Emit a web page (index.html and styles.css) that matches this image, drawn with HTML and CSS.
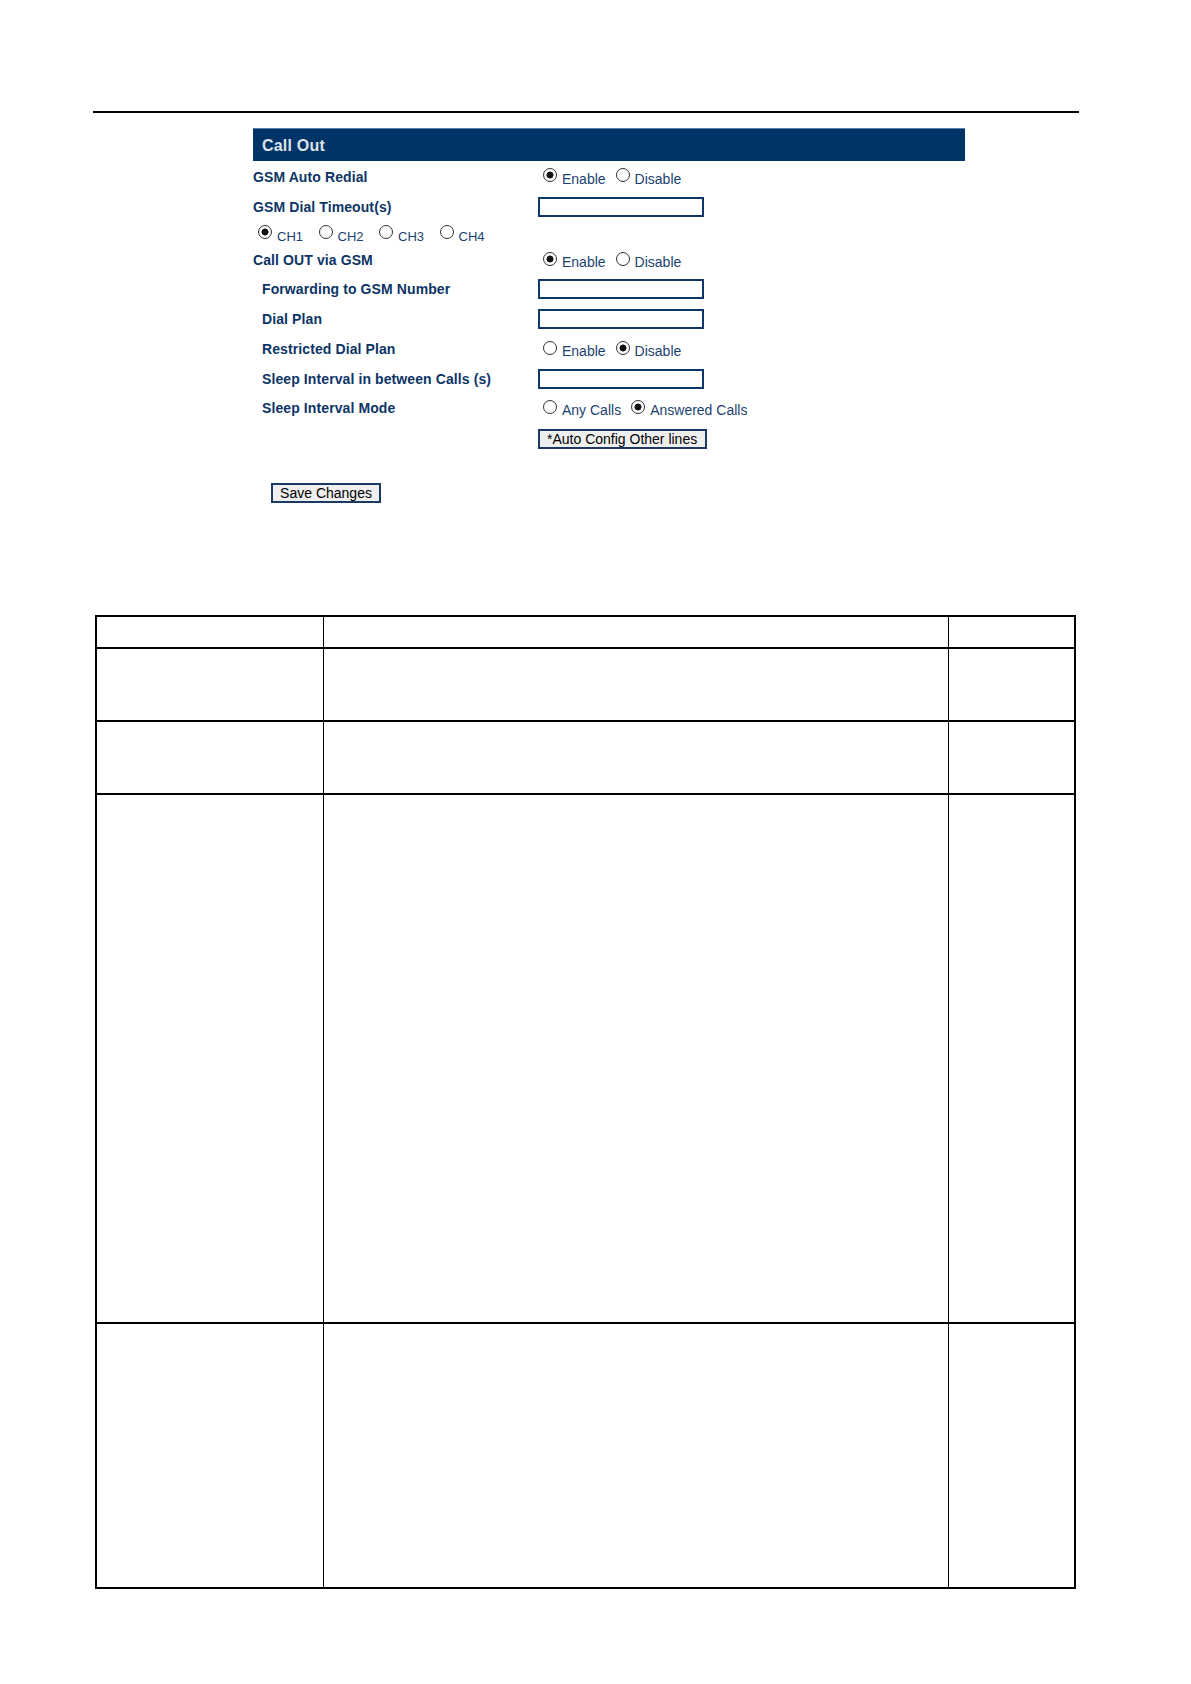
FILE: index.html
```html
<!DOCTYPE html>
<html lang="en">
<head>
<meta charset="utf-8">
<title>Call Out</title>
<link rel="stylesheet" href="styles.css">
</head>
<body>
<div class="page">
  <div class="rule"></div>

  <section class="panel">
    <div class="panel-head">Call Out</div>

    <div class="form">
      <div class="row h31">
        <label class="lbl">GSM Auto Redial</label>
        <div class="ctl">
          <label class="opt"><input type="radio" name="redial" checked><span>Enable</span></label>
          <label class="opt"><input type="radio" name="redial"><span>Disable</span></label>
        </div>
      </div>

      <div class="row h29">
        <label class="lbl">GSM Dial Timeout(s)</label>
        <div class="ctl"><input class="txt" type="text"></div>
      </div>

      <div class="chrow h25">
        <label class="ch"><input type="radio" name="ch" checked><span>CH1</span></label>
        <label class="ch"><input type="radio" name="ch"><span>CH2</span></label>
        <label class="ch"><input type="radio" name="ch"><span>CH3</span></label>
        <label class="ch"><input type="radio" name="ch"><span>CH4</span></label>
      </div>

      <div class="row h28">
        <label class="lbl">Call OUT via GSM</label>
        <div class="ctl">
          <label class="opt"><input type="radio" name="via" checked><span>Enable</span></label>
          <label class="opt"><input type="radio" name="via"><span>Disable</span></label>
        </div>
      </div>

      <div class="row h30">
        <label class="lbl sub">Forwarding to GSM Number</label>
        <div class="ctl"><input class="txt" type="text"></div>
      </div>

      <div class="row h29">
        <label class="lbl sub">Dial Plan</label>
        <div class="ctl"><input class="txt" type="text"></div>
      </div>

      <div class="row h32">
        <label class="lbl sub">Restricted Dial Plan</label>
        <div class="ctl">
          <label class="opt"><input type="radio" name="rdp"><span>Enable</span></label>
          <label class="opt"><input type="radio" name="rdp" checked><span>Disable</span></label>
        </div>
      </div>

      <div class="row h27">
        <label class="lbl sub">Sleep Interval in between Calls (s)</label>
        <div class="ctl"><input class="txt" type="text"></div>
      </div>

      <div class="row h32">
        <label class="lbl sub">Sleep Interval Mode</label>
        <div class="ctl">
          <label class="opt"><input type="radio" name="mode"><span>Any Calls</span></label>
          <label class="opt"><input type="radio" name="mode" checked><span>Answered Calls</span></label>
        </div>
      </div>

      <div class="row h29">
        <span></span>
        <div class="ctl"><button class="btn btn-auto" type="button">*Auto Config Other lines</button></div>
      </div>
    </div>

    <div class="save-row">
      <button class="btn btn-save" type="button">Save Changes</button>
    </div>
  </section>

  <table class="spec">
    <colgroup>
      <col class="c1">
      <col class="c2">
      <col class="c3">
    </colgroup>
    <tr class="t-head"><td></td><td></td><td></td></tr>
    <tr class="t-short"><td></td><td></td><td></td></tr>
    <tr class="t-short"><td></td><td></td><td></td></tr>
    <tr class="t-long"><td></td><td></td><td></td></tr>
    <tr class="t-mid"><td></td><td></td><td></td></tr>
  </table>
</div>
</body>
</html>
```

FILE: styles.css
```css
* { box-sizing: border-box; }

html, body {
  margin: 0;
  padding: 0;
  background: #ffffff;
}

body {
  font-family: "Liberation Sans", Arial, sans-serif;
  font-size: 14px;
  color: #000;
}

.page {
  width: 1191px;
  min-height: 1684px;
  overflow: hidden;
}

.rule {
  margin: 111px 0 0 93px;
  width: 986px;
  height: 2px;
  background: #000;
}

.panel {
  margin: 15px 0 0 253px;
  width: 712px;
}

.panel-head {
  height: 33px;
  background: #003366;
  border-top: 1px solid #5b7ea6;
  color: #dde2ea;
  font-weight: bold;
  font-size: 16px;
  line-height: 33px;
  padding-left: 9px;
  letter-spacing: 0.2px;
}

.form {
  display: flex;
  flex-direction: column;
}

.row {
  display: grid;
  grid-template-columns: 285px 1fr;
  align-items: center;
}

.h25 { height: 25px; }
.h27 { height: 27px; }
.h28 { height: 28px; }
.h29 { height: 29px; }
.h30 { height: 30px; }
.h31 { height: 31px; }
.h32 { height: 32px; }

.lbl {
  font-weight: bold;
  font-size: 14px;
  color: #0d3466;
  letter-spacing: 0.1px;
}

.lbl.sub { padding-left: 9px; }

.ctl {
  display: flex;
  align-items: center;
}

.opt {
  display: flex;
  align-items: center;
  margin-right: 10px;
  color: #1b3f70;
  font-size: 14px;
}

.opt input,
.ch input {
  -webkit-appearance: none;
  appearance: none;
  width: 14px;
  height: 14px;
  margin: 0 5px 3px 5px;
  border: 1px solid #333;
  border-radius: 50%;
  background: radial-gradient(circle at 50% 50%, #ffffff 0, #ffffff 60%, #e6e6e6 100%);
  flex: none;
}

.opt input:checked,
.ch input:checked {
  background: radial-gradient(circle at 50% 50%, #111 0, #111 3.2px, #fff 3.8px, #fff 60%, #e6e6e6 100%);
}

.opt span { padding-top: 4px; }

.opt + .opt input { margin-left: 0; }

.chrow {
  display: flex;
  align-items: center;
}

.ch {
  display: flex;
  align-items: center;
  color: #1b3f70;
  font-size: 13px;
  margin-right: 10.5px;
}

.ch span { padding-top: 5px; }

.txt {
  width: 166px;
  height: 20px;
  margin: 0;
  border: 2px solid #0d3766;
  background: #fff;
  padding: 0 3px;
  font: 13px "Liberation Sans", Arial, sans-serif;
}

.btn {
  font-family: "Liberation Sans", Arial, sans-serif;
  font-size: 14px;
  color: #000;
  background: #efefef;
  border: 2px solid #1a3a63;
  height: 20px;
  line-height: 16px;
  padding: 0 6px;
  margin: 0;
  white-space: nowrap;
}

.btn-auto {
  width: 169px;
  text-align: left;
  padding-left: 7px;
}

.btn-save {
  width: 110px;
}

.save-row {
  margin: 30px 0 0 18px;
  display: flex;
}

.spec {
  margin: 112px 0 0 95px;
  width: 979px;
  border-collapse: collapse;
  table-layout: fixed;
}

.c1 { width: 227px; }
.c2 { width: 625px; }
.c3 { width: 127px; }

.spec td {
  border-top: 2px solid #000;
  border-bottom: 2px solid #000;
  border-left: 1px solid #000;
  border-right: 1px solid #000;
  padding: 0;
}

.spec td:first-child { border-left: 2px solid #000; }
.spec td:last-child { border-right: 2px solid #000; }

.t-head { height: 32px; }
.t-short { height: 73px; }
.t-long { height: 529px; }
.t-mid { height: 265px; }
```
